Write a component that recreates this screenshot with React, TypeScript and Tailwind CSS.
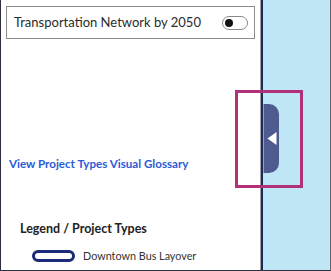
import React from "react";

export default function App() {
  return (
    <div
      className="relative w-[331px] h-[271px] flex border-l border-b border-r border-l-[#2b3040] border-b-[#2b3040] border-r-[#5f6675] overflow-hidden"
      style={{ fontFamily: "Lato, 'Noto Sans', sans-serif" }}
    >
      <div className="w-[260px] shrink-0 bg-white border-r border-[#a3a3a3] flex flex-col pt-[6px] pl-[5px] pr-[5px]">
        <div className="h-[33px] border border-[#8c8c8c] flex items-center justify-between pl-[7px] pr-[6px]">
          <span className="text-[13px] text-[#2b2b2b]">Transportation Network by 2050</span>
          <div className="w-[26px] h-[14px] rounded-full border border-[#8a8a8a] flex items-center pl-[2px]">
            <div className="w-[8px] h-[8px] rounded-full bg-[#111]" />
          </div>
        </div>
        <div className="mt-[119px] pl-[3px] text-[11.6px] font-bold text-[#2a5bd7] leading-none">
          View Project Types Visual Glossary
        </div>
        <div className="mt-[53px] pl-[14px] text-[12.5px] font-bold text-[#222] leading-none">
          Legend / Project Types
        </div>
        <div className="mt-[15px] pl-[26px] flex items-center gap-[8px]">
          <div className="w-[43px] h-[12px] rounded-full border-[3px] border-[#1c2a78]" />
          <span className="text-[10.8px] text-[#333] leading-none">Downtown Bus Layover</span>
        </div>
      </div>
      <div className="w-[2px] shrink-0 bg-[#1f2a5c]" />
      <div className="flex-1 bg-[#bfe6f5]" />

      <div className="absolute left-[262px] top-[104px] w-[16px] h-[69px] bg-[#4f5b8f] rounded-r-[10px] border-l border-[#9aa0b5] flex items-center justify-center">
        <svg width="10" height="13" viewBox="0 0 10 13">
          <polygon points="9.5,0 9.5,13 0.5,6.5" fill="#ffffff" />
        </svg>
      </div>
      <div className="absolute left-[234px] top-[90px] w-[68px] h-[98px] border-[3px] border-[#b0307a]" />
    </div>
  );
}
